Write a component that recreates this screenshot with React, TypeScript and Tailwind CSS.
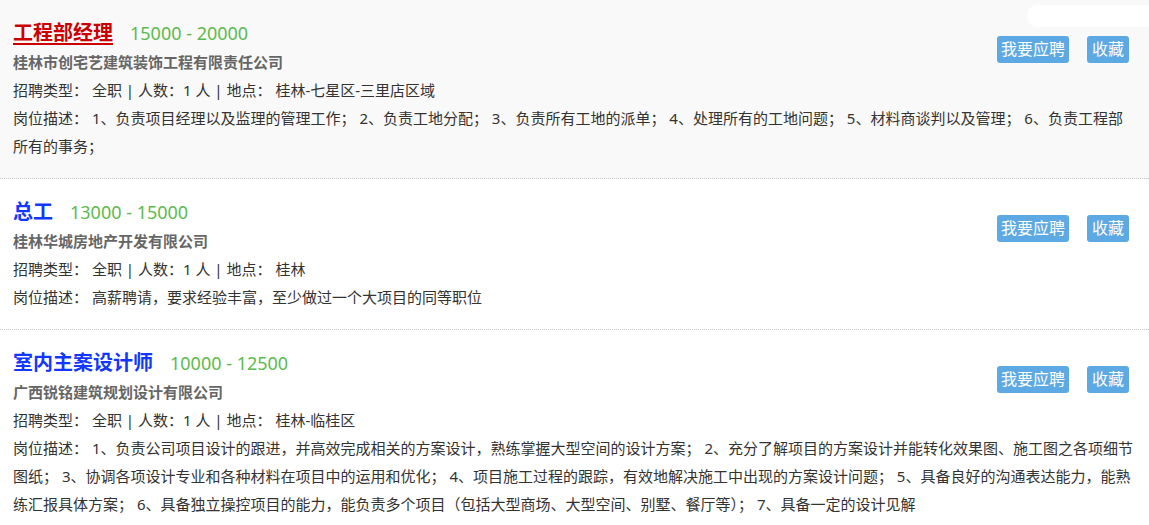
import React from 'react';

interface Job {
  title: string;
  salary: string;
  company: string;
  location: string;
  desc: string;
  titleClass: string;
  active?: boolean;
}

const jobs: Job[] = [
  {
    title: '工程部经理',
    salary: '15000 - 20000',
    company: '桂林市创宅艺建筑装饰工程有限责任公司',
    location: '桂林-七星区-三里店区域',
    desc: '1、负责项目经理以及监理的管理工作； 2、负责工地分配； 3、负责所有工地的派单； 4、处理所有的工地问题； 5、材料商谈判以及管理； 6、负责工程部所有的事务；',
    titleClass: 'text-[#cc0000] underline decoration-2 underline-offset-[3px]',
    active: true,
  },
  {
    title: '总工',
    salary: '13000 - 15000',
    company: '桂林华城房地产开发有限公司',
    location: '桂林',
    desc: '高薪聘请，要求经验丰富，至少做过一个大项目的同等职位',
    titleClass: 'text-[#1237ff]',
  },
  {
    title: '室内主案设计师',
    salary: '10000 - 12500',
    company: '广西锐铭建筑规划设计有限公司',
    location: '桂林-临桂区',
    desc: '1、负责公司项目设计的跟进，并高效完成相关的方案设计，熟练掌握大型空间的设计方案； 2、充分了解项目的方案设计并能转化效果图、施工图之各项细节图纸； 3、协调各项设计专业和各种材料在项目中的运用和优化； 4、项目施工过程的跟踪，有效地解决施工中出现的方案设计问题； 5、具备良好的沟通表达能力，能熟练汇报具体方案； 6、具备独立操控项目的能力，能负责多个项目（包括大型商场、大型空间、别墅、餐厅等）； 7、具备一定的设计见解',
    titleClass: 'text-[#1237ff]',
  },
];

const JobCard: React.FC<{ job: Job }> = ({ job }) => (
  <div
    className={
      'relative pl-[13px] pr-[13px] pt-[18px] pb-[18px] border-b border-dotted border-[#c8c8c8] ' +
      (job.active ? 'bg-[#f9f9f9]' : 'bg-white')
    }
  >
    {job.active && (
      <div className="absolute right-0 top-[5px] w-[122px] h-[22px] bg-white rounded-l-full" />
    )}
    <div className="flex justify-between items-start">
      <div>
        <div className="flex items-center h-[30px]">
          <span className={'text-[20px] font-bold ' + job.titleClass}>{job.title}</span>
          <span className="ml-[17px] text-[18px] text-[#5cbb4e]">{job.salary}</span>
        </div>
        <div className="text-[15px] leading-[28px] font-bold text-[#666]">{job.company}</div>
        <div className="text-[15px] leading-[28px] text-[#333]">
          招聘类型：&nbsp;全职 | 人数：1 人 | 地点：&nbsp;{job.location}
        </div>
      </div>
      <div className="flex gap-[18px] mt-[18px] mr-[7px]">
        <button className="h-[27px] px-[4px] rounded-[3px] bg-[#5da9e3] text-white text-[16px] leading-[27px]">
          我要应聘
        </button>
        <button className="h-[27px] px-[5px] rounded-[3px] bg-[#5da9e3] text-white text-[16px] leading-[27px]">
          收藏
        </button>
      </div>
    </div>
    <div className="text-[15px] leading-[28px] text-[#333]">
      岗位描述：&nbsp;{job.desc}
    </div>
  </div>
);

export default function App() {
  return (
    <div
      className="w-[1149px] h-[525px] overflow-hidden bg-white"
      style={{ fontFamily: '"Noto Sans", "Noto Sans CJK SC", sans-serif' }}
    >
      {jobs.map((job) => (
        <JobCard key={job.title} job={job} />
      ))}
    </div>
  );
}
